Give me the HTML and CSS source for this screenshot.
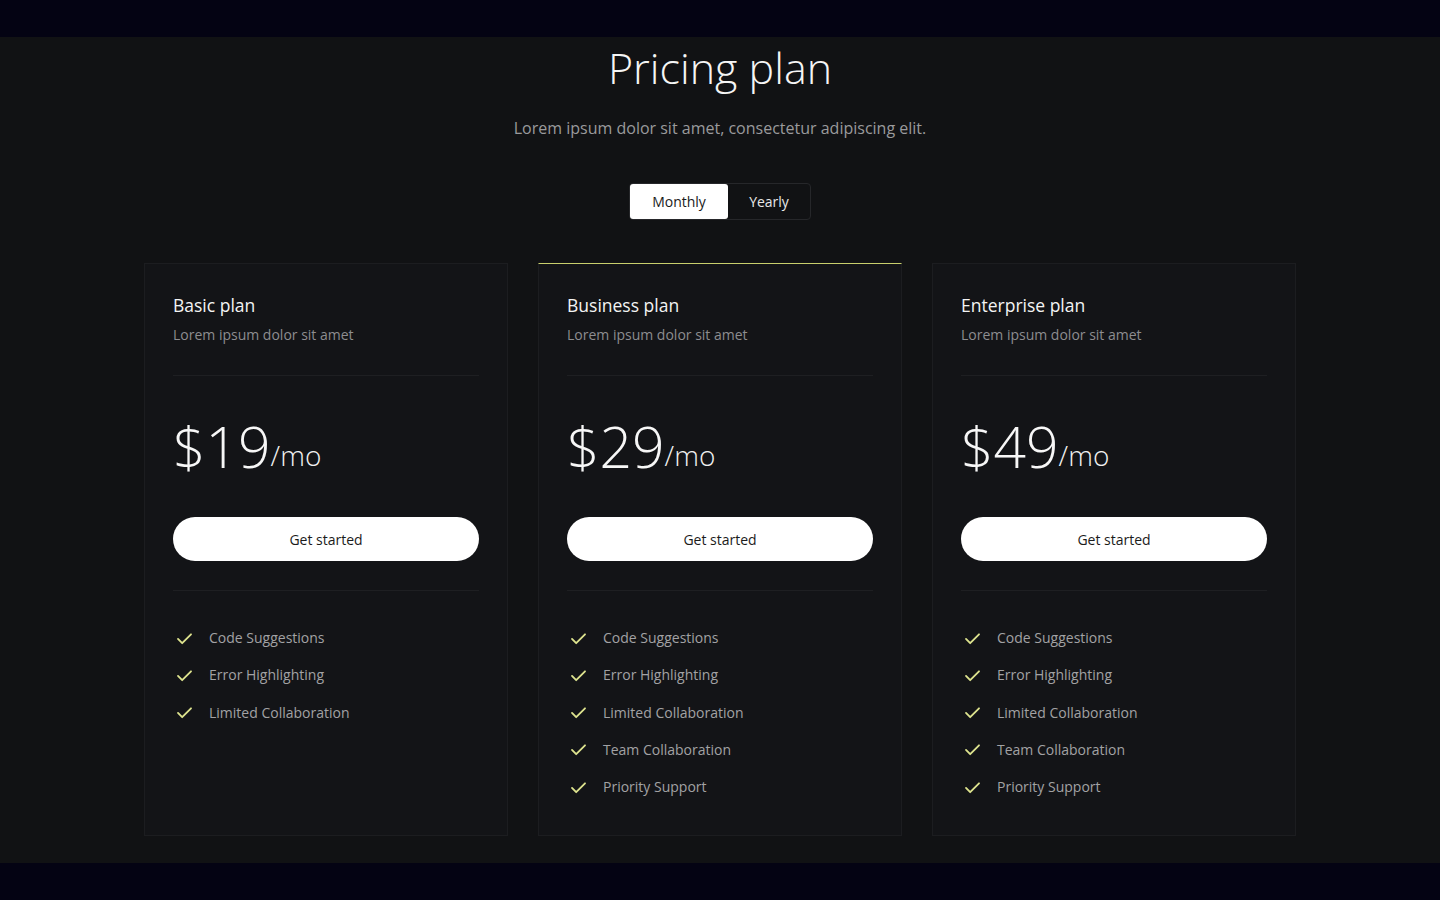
FILE: index.html
```html
<!DOCTYPE html>
<html lang="en">
<head>
<meta charset="utf-8">
<title>Pricing plan</title>
<link rel="stylesheet" href="styles.css">
</head>
<body>
<section class="pricing">
  <h1 class="title">Pricing plan</h1>
  <p class="lead">Lorem ipsum dolor sit amet, consectetur adipiscing elit.</p>
  <div class="toggle">
    <button class="toggle-btn active">Monthly</button>
    <button class="toggle-btn">Yearly</button>
  </div>
  <div class="cards">
    <article class="card">
      <h2 class="card-title">Basic plan</h2>
      <p class="card-sub">Lorem ipsum dolor sit amet</p>
      <hr class="divider">
      <div class="price"><span class="amount">$19</span><span class="per">/mo</span></div>
      <button class="cta">Get started</button>
      <hr class="divider divider-b">
      <ul class="features">
        <li><svg class="check" viewBox="0 0 18 14"><path d="M2 7.5l4.5 4.5L16 2.5"/></svg>Code Suggestions</li>
        <li><svg class="check" viewBox="0 0 18 14"><path d="M2 7.5l4.5 4.5L16 2.5"/></svg>Error Highlighting</li>
        <li><svg class="check" viewBox="0 0 18 14"><path d="M2 7.5l4.5 4.5L16 2.5"/></svg>Limited Collaboration</li>
      </ul>
    </article>
    <article class="card featured">
      <h2 class="card-title">Business plan</h2>
      <p class="card-sub">Lorem ipsum dolor sit amet</p>
      <hr class="divider">
      <div class="price"><span class="amount">$29</span><span class="per">/mo</span></div>
      <button class="cta">Get started</button>
      <hr class="divider divider-b">
      <ul class="features">
        <li><svg class="check" viewBox="0 0 18 14"><path d="M2 7.5l4.5 4.5L16 2.5"/></svg>Code Suggestions</li>
        <li><svg class="check" viewBox="0 0 18 14"><path d="M2 7.5l4.5 4.5L16 2.5"/></svg>Error Highlighting</li>
        <li><svg class="check" viewBox="0 0 18 14"><path d="M2 7.5l4.5 4.5L16 2.5"/></svg>Limited Collaboration</li>
        <li><svg class="check" viewBox="0 0 18 14"><path d="M2 7.5l4.5 4.5L16 2.5"/></svg>Team Collaboration</li>
        <li><svg class="check" viewBox="0 0 18 14"><path d="M2 7.5l4.5 4.5L16 2.5"/></svg>Priority Support</li>
      </ul>
    </article>
    <article class="card">
      <h2 class="card-title">Enterprise plan</h2>
      <p class="card-sub">Lorem ipsum dolor sit amet</p>
      <hr class="divider">
      <div class="price"><span class="amount">$49</span><span class="per">/mo</span></div>
      <button class="cta">Get started</button>
      <hr class="divider divider-b">
      <ul class="features">
        <li><svg class="check" viewBox="0 0 18 14"><path d="M2 7.5l4.5 4.5L16 2.5"/></svg>Code Suggestions</li>
        <li><svg class="check" viewBox="0 0 18 14"><path d="M2 7.5l4.5 4.5L16 2.5"/></svg>Error Highlighting</li>
        <li><svg class="check" viewBox="0 0 18 14"><path d="M2 7.5l4.5 4.5L16 2.5"/></svg>Limited Collaboration</li>
        <li><svg class="check" viewBox="0 0 18 14"><path d="M2 7.5l4.5 4.5L16 2.5"/></svg>Team Collaboration</li>
        <li><svg class="check" viewBox="0 0 18 14"><path d="M2 7.5l4.5 4.5L16 2.5"/></svg>Priority Support</li>
      </ul>
    </article>
  </div>
</section>
</body>
</html>
```
FILE: styles.css
```css
* { box-sizing: border-box; }
html, body { margin: 0; padding: 0; }
body {
  background: #040313;
  font-family: "Open Sans", "Noto Sans", sans-serif;
  color: #f2f2f2;
  padding: 37px 0;
}
.pricing {
  background: #111214;
  padding: 0 0 27px;
  display: flex;
  flex-direction: column;
  align-items: center;
}
.title {
  margin: 0;
  font-size: 43px;
  line-height: 62px;
  font-weight: 300;
  color: #f5f5f5;
}
.lead {
  margin: 17px 0 0;
  font-size: 16px;
  line-height: 24px;
  color: #9a9a9c;
}
.toggle {
  margin-top: 43px;
  display: flex;
  border: 1px solid #26272a;
  border-radius: 4px;
  height: 37px;
}
.toggle-btn {
  font-family: inherit;
  font-size: 14px;
  border: 0;
  background: transparent;
  color: #e8e8e8;
  padding: 0;
  cursor: pointer;
  border-radius: 3px;
}
.toggle-btn:first-child { width: 98px; }
.toggle-btn:last-child { width: 82px; }
.toggle-btn.active {
  background: #ffffff;
  color: #1a1a1a;
}
.cards {
  margin-top: 43px;
  width: 1152px;
  display: grid;
  grid-template-columns: repeat(3, 1fr);
  gap: 30px;
}
.card {
  background: #131417;
  border: 1px solid #1c1d20;
  padding: 29px 28px 37px;
}
.card.featured {
  border-top-color: #c8cf6c;
}
.card-title {
  margin: 0;
  font-size: 17.5px;
  line-height: 24px;
  font-weight: 400;
  color: #f4f4f4;
}
.card-sub {
  margin: 8px 0 0;
  font-size: 14px;
  line-height: 20px;
  color: #8d8d90;
}
.divider {
  margin: 30px 0 0;
  border: 0;
  height: 1px;
  background: #1e1f22;
}
.price {
  margin-top: 35px;
  display: flex;
  align-items: baseline;
  line-height: 70px;
}
.amount {
  font-size: 57px;
  font-weight: 300;
  color: #f7f7f7;
}
.per {
  font-size: 28px;
  font-weight: 300;
  color: #f0f0f0;
  position: relative;
  top: -2px;
}
.cta {
  display: block;
  width: 100%;
  margin-top: 25px;
  height: 44px;
  border: 0;
  border-radius: 22px;
  background: #ffffff;
  color: #1b1b1b;
  font-family: inherit;
  font-size: 14px;
  cursor: pointer;
}
.divider-b { margin-top: 29px; }
.features {
  list-style: none;
  margin: 36px 0 0;
  padding: 0;
  display: flex;
  flex-direction: column;
  gap: 15.25px;
}
.features li {
  display: flex;
  align-items: center;
  font-size: 14px;
  line-height: 22px;
  color: #a2a2a4;
}
.check {
  width: 17px;
  height: 13px;
  margin: 0 16px 0 3px;
  fill: none;
  stroke: #dde38e;
  stroke-width: 2;
  stroke-linecap: round;
  stroke-linejoin: round;
  flex: none;
}
```
